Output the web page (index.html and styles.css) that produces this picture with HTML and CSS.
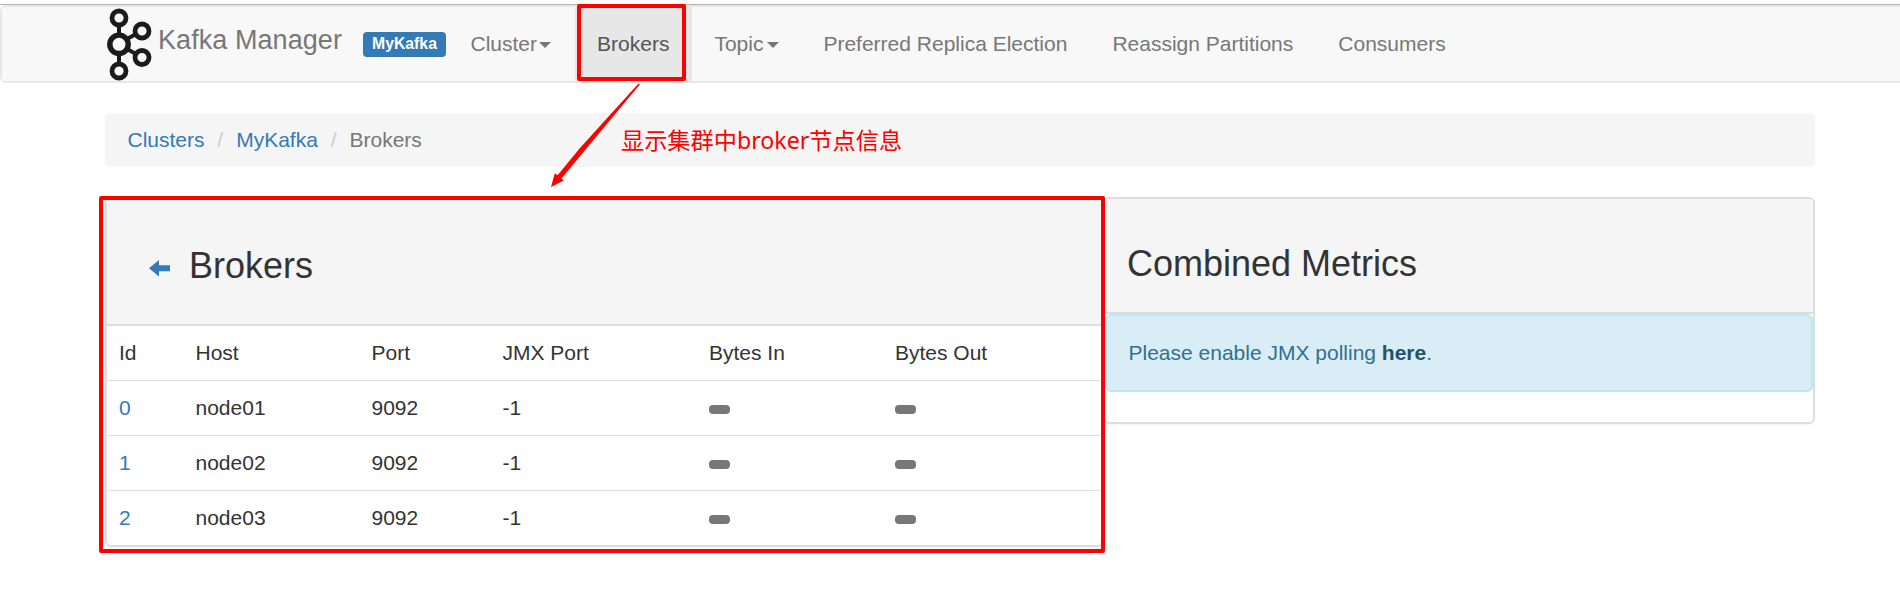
FILE: index.html
```
<!DOCTYPE html>
<html lang="en">
<head>
<meta charset="utf-8">
<title>Kafka Manager</title>
<link rel="stylesheet" href="styles.css">
</head>
<body>
<nav class="navbar">
  <a class="brand">
    <svg class="logo" width="48" height="74" viewBox="105 7 48 74" fill="none" stroke="#1b1b1b">
      <path d="M119 25v10M119 53v11M127 39l9-5M127 49l9 5" stroke-width="4"/>
      <g stroke-width="4.8"><circle cx="119" cy="18" r="7"/><circle cx="119" cy="71" r="7"/><circle cx="142" cy="31" r="7"/><circle cx="142" cy="57.5" r="7"/></g>
      <circle cx="119" cy="44.3" r="9.2" stroke-width="5.4"/>
    </svg>
    <span class="brand-name">Kafka Manager</span>
  </a>
  <span class="label">MyKafka</span>
  <ul class="nav">
    <li>Cluster<i class="caret"></i></li>
    <li class="active">Brokers</li>
    <li>Topic<i class="caret caret-wide"></i></li>
    <li>Preferred Replica Election</li>
    <li>Reassign Partitions</li>
    <li>Consumers</li>
  </ul>
</nav>
<main class="container">
  <ol class="breadcrumb">
    <li><a>Clusters</a></li>
    <li><a>MyKafka</a></li>
    <li>Brokers</li>
  </ol>
  <div class="row">
    <section class="panel brokers">
      <header class="panel-heading">
        <svg class="back" width="21" height="16" viewBox="0 0 21 16"><path d="M0 8.300L10 0v5.300h11v6H10V16.500z" fill="#337ab7"/></svg>
        <h3>Brokers</h3>
      </header>
      <table class="table">
        <colgroup><col class="c-id"><col class="c-host"><col class="c-port"><col class="c-jmx"><col class="c-in"><col></colgroup>
        <thead><tr><th>Id</th><th>Host</th><th>Port</th><th>JMX Port</th><th>Bytes In</th><th>Bytes Out</th></tr></thead>
        <tbody>
          <tr><td><a>0</a></td><td>node01</td><td>9092</td><td>-1</td><td><span class="badge"></span></td><td><span class="badge"></span></td></tr>
          <tr><td><a>1</a></td><td>node02</td><td>9092</td><td>-1</td><td><span class="badge"></span></td><td><span class="badge"></span></td></tr>
          <tr><td><a>2</a></td><td>node03</td><td>9092</td><td>-1</td><td><span class="badge"></span></td><td><span class="badge"></span></td></tr>
        </tbody>
      </table>
    </section>
    <section class="panel metrics">
      <header class="panel-heading"><h3>Combined Metrics</h3></header>
      <div class="alert">Please enable JMX polling <b>here</b>.</div>
    </section>
  </div>
</main>
<div class="mark mark-nav"></div>
<div class="mark mark-panel"></div>
<svg class="pointer" width="100" height="110" viewBox="545 80 100 110"><path d="M638.500 83.500L639.800 84.500L586 149L561.500 178.500L563.800 180.600L551 187L554.800 173.300L557.600 175.200L580 148Z" fill="#f00"/></svg>
<div class="note">显示集群中broker节点信息</div>
</body>
</html>
```
FILE: styles.css
```
* { box-sizing: border-box; }
body {
  margin: 0;
  padding-top: 5px;
  position: relative;
  height: 597px;
  overflow: hidden;
  background: #fff;
  color: #333;
  font: 21px/30px "Liberation Sans", Arial, sans-serif;
}
body::before {
  content: "";
  position: absolute;
  top: 4px;
  left: 0;
  width: 100%;
  height: 1px;
  background: #b4b4b4;
}
a { color: #337ab7; }
ul, ol { list-style: none; margin: 0; padding: 0; }
h3 { margin: 0; font-size: 36px; line-height: 40px; font-weight: normal; }

.navbar {
  display: flex;
  height: 78px;
  margin-right: -8px;
  padding-left: 103px;
  background: #f8f8f8;
  border: 2px solid #e7e7e7;
  border-radius: 6px;
  color: #777;
}
.brand { display: flex; width: 258px; color: #777; }
.logo { flex: none; }
.brand-name { padding: 18px 0 0 5px; font-size: 27px; letter-spacing: .07px; white-space: nowrap; }
.label {
  width: 83px;
  height: 25px;
  margin-top: 25px;
  border-radius: 4px;
  background: #337ab7;
  color: #fff;
  font-size: 15.75px;
  line-height: 24px;
  font-weight: bold;
  text-align: center;
}
.nav { display: flex; padding-left: 2px; white-space: nowrap; }
.nav li { height: 76px; padding: 22px 22.5px 0; }
.nav .active { background: #e7e7e7; color: #555; }
.caret {
  display: inline-block;
  margin: 0 1px 0 2px;
  border: 6px solid transparent;
  border-top-color: currentColor;
  border-bottom: 0;
  vertical-align: middle;
}
.caret-wide { margin: 0 -1px 0 4px; }

.container { width: 1710px; margin: 30px 0 0 105px; }
.breadcrumb {
  display: flex;
  height: 54px;
  padding: 12px 22.5px;
  background: #f5f5f5;
  border-radius: 6px;
  color: #777;
}
.breadcrumb li + li::before { content: "/"; padding: 0 13px 0 12.8px; color: #ccc; }

.row { display: flex; align-items: flex-start; margin-top: 30px; }
.panel {
  border: 2px solid #ddd;
  border-radius: 6px;
  box-shadow: 0 1px 2px rgba(0, 0, 0, .05);
}
.panel-heading {
  display: flex;
  background: #f5f5f5;
  border-bottom: 2px solid #ddd;
  border-radius: 4px 4px 0 0;
}
.brokers { width: 997.5px; }
.brokers .panel-heading { height: 127px; padding: 47px 0 0 42px; }
.back { margin: 14px 19px 0 0; overflow: visible; }
.metrics { width: 712.5px; height: 227px; }
.metrics .panel-heading { height: 115px; padding: 45px 0 0 22.5px; }
.alert {
  height: 78px;
  padding: 22px 22px 0;
  border: 2px solid #bce8f1;
  border-radius: 6px;
  background: #d9edf7;
  color: #31708f;
}
.alert b { color: #245269; }

.table { width: 100%; table-layout: fixed; border-spacing: 0; }
.table th, .table td { padding: 12px; height: 54px; text-align: left; font-weight: normal; }
.table td { height: 55px; border-top: 1px solid #ddd; }
.c-id { width: 76.5px; }
.c-host { width: 176px; }
.c-port { width: 131px; }
.c-jmx { width: 206.5px; }
.c-in { width: 186px; }
.badge { display: block; width: 21px; height: 9px; margin-top: 3px; border-radius: 4px; background: #777; }

.mark { position: absolute; border: 4px solid #f00; border-radius: 2px; }
.mark-nav { left: 577px; top: 4px; width: 109px; height: 77px; }
.mark-panel { left: 99px; top: 196px; width: 1006px; height: 357px; }
.pointer { position: absolute; left: 545px; top: 80px; }
.note {
  position: absolute;
  left: 621px;
  top: 124px;
  color: #f00;
  font: 23.2px/32px "Noto Sans", "Noto Sans CJK SC", sans-serif;
  white-space: nowrap;
}
```
